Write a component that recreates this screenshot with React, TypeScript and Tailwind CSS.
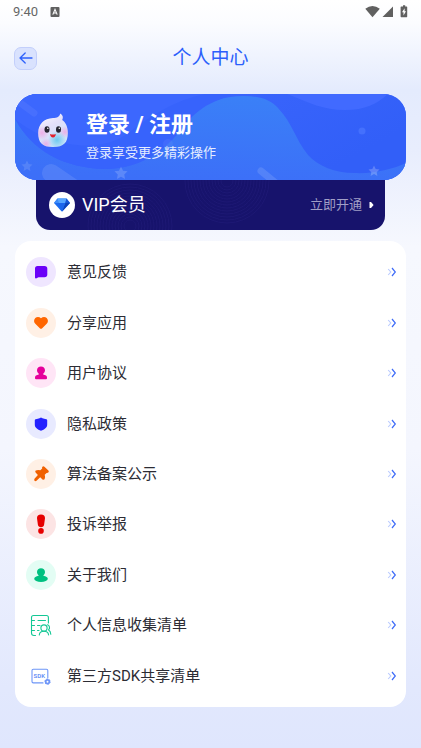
import React, { FC, ReactNode } from "react";

const STAR =
  "M0 -5.5L1.7 -1.9L5.5 -1.5L2.7 1.2L3.4 5L0 3.1L-3.4 5L-2.7 1.2L-5.5 -1.5L-1.7 -1.9Z";

const RINGS = [6, 9, 12, 15, 18, 21, 24, 27, 30, 33, 36, 39, 42];

type MenuItem = {
  label: string;
  badge: string;
  icon: ReactNode;
};

const menu: MenuItem[] = [
  {
    label: "意见反馈",
    badge: "bg-[#efe6ff]",
    icon: (
      <path
        fill="#6a00f8"
        d="M11.5 9H18.5Q21.3 9 21.3 11.5V17.5Q21.3 20.2 18.5 20.2H12.5L10 21.4Q9 21.6 9 20.6V11.5Q9 9 11.5 9Z"
      />
    ),
  },
  {
    label: "分享应用",
    badge: "bg-[#fff0e5]",
    icon: (
      <path
        fill="#ff6600"
        d="M15 10.2C16.8 8.5 19.2 8.6 20.7 10C22.4 11.7 22.3 14.2 20.7 15.8L16.2 20.2Q15 21.4 13.8 20.2L9.3 15.8C7.7 14.2 7.6 11.7 9.3 10C10.8 8.6 13.2 8.5 15 10.2Z"
      />
    ),
  },
  {
    label: "用户协议",
    badge: "bg-[#ffe5f6]",
    icon: (
      <path
        fill="#e5009b"
        d="M15 8.5C17.3 8.5 19 10.1 19 12.3C19 13.9 18.2 15 17.2 15.8V16.6L19.5 17.3Q21 17.8 21 19.4V20.2Q21 21.3 19.9 21.3H10.1Q9 21.3 9 20.2V19.4Q9 17.8 10.5 17.3L12.8 16.6V15.8C11.8 15 11 13.9 11 12.3C11 10.1 12.7 8.5 15 8.5Z"
      />
    ),
  },
  {
    label: "隐私政策",
    badge: "bg-[#e8eaff]",
    icon: (
      <path
        fill="#2321ff"
        d="M15 8.4L16.5 9.3Q18 10 20.3 10.2Q21.2 10.3 21.2 11.2V15.5C21.2 18.7 18.5 20.4 15 21.8C11.5 20.4 8.8 18.7 8.8 15.5V11.2Q8.8 10.3 9.7 10.2Q12 10 13.5 9.3Z"
      />
    ),
  },
  {
    label: "算法备案公示",
    badge: "bg-[#fff0e5]",
    icon: (
      <path
        fill="#f06000"
        d="M16.4 7.7Q17.4 6.8 18.4 7.7L22.4 11.6Q23.3 12.6 22.3 13.6Q21.4 14.1 20.6 13.9L18.7 15.8Q19.6 18.4 18.6 20.3Q17.5 21.2 16.5 20.4L14.2 18.2L10.5 21.8Q9.3 22.5 8.5 21.8Q7.9 20.9 8.5 19.8L11.9 15.9L9.6 13.6Q8.8 12.5 9.7 11.6Q11.8 10.5 14.3 11.3L16.2 9.6Q15.8 8.4 16.4 7.7Z"
      />
    ),
  },
  {
    label: "投诉举报",
    badge: "bg-[#fce4e4]",
    icon: (
      <g fill="#e60000">
        <path d="M15 5.4C17.6 5.4 19.2 6.8 19 9.2L18.1 15.8C17.9 17.4 16.8 18.3 15 18.3C13.2 18.3 12.1 17.4 11.9 15.8L11 9.2C10.8 6.8 12.4 5.4 15 5.4Z" />
        <circle cx="15" cy="21.9" r="2.8" />
      </g>
    ),
  },
  {
    label: "关于我们",
    badge: "bg-[#e3fdf4]",
    icon: (
      <g fill="#00c080">
        <path d="M15 8.2C17.3 8.2 19 9.8 19 12C19 13.5 18.2 14.6 17.3 15.4V17H12.7V15.4C11.8 14.6 11 13.5 11 12C11 9.8 12.7 8.2 15 8.2Z" />
        <ellipse cx="15" cy="18.8" rx="6.8" ry="3.2" />
      </g>
    ),
  },
  {
    label: "个人信息收集清单",
    badge: "",
    icon: (
      <g fill="none" stroke="#14c895" strokeWidth="1.1" strokeLinecap="round">
        <path d="M22.4 13V7.5Q22.4 5.5 20.4 5.5H7.5Q5.5 5.5 5.5 7.5V23Q5.5 25.5 8 25.5H9.5" />
        <path d="M5.5 10.5H8.5M12 10.5H19.5M5.5 15.5H8.5M11.5 15.5H14M5.5 20.5H8.5M11.5 20.5H13" />
        <circle cx="18" cy="18" r="3.1" />
        <path d="M13.3 25C13.5 22.6 15 21.3 18 21.3S22.3 22.6 22.6 25M21.3 14.8C23.6 15.2 24.3 18 22.6 19.9C24.2 20.8 24.7 22.2 24.8 24.3" />
      </g>
    ),
  },
  {
    label: "第三方SDK共享清单",
    badge: "",
    icon: (
      <g>
        <path
          fill="none"
          stroke="#6e96f8"
          strokeWidth="1.1"
          strokeLinecap="round"
          d="M21.8 17V9.5Q21.8 8.2 20.5 8.2H7.3Q6 8.2 6 9.5V20.6Q6 21.9 7.3 21.9H17"
        />
        <text
          x="7.6"
          y="17"
          fill="#5583f5"
          fontSize="6"
          fontWeight="500"
          fontFamily="Roboto, sans-serif"
        >
          SDK
        </text>
        <circle
          cx="21.5"
          cy="20.7"
          r="1.8"
          fill="none"
          stroke="#6e96f8"
          strokeWidth="1.7"
        />
        <circle
          cx="21.5"
          cy="20.7"
          r="2.7"
          fill="none"
          stroke="#6e96f8"
          strokeWidth="1"
          strokeDasharray="1.4 1.4"
        />
      </g>
    ),
  },
];

const StatusBar: FC = () => (
  <div className="flex h-6 items-center justify-between px-[13px] text-[#666]">
    <div className="flex items-center gap-3 font-[Roboto] text-[13px] leading-6">
      <span>9:40</span>
      <svg width="10" height="10" viewBox="0 0 10 10">
        <rect x="0.5" width="9" height="10" rx="1" fill="#606060" />
        <path
          d="M2.8 7.6L5 2.4L7.2 7.6M3.6 6H6.4"
          fill="none"
          stroke="#fff"
          strokeWidth="1.1"
        />
      </svg>
    </div>
    <svg width="43" height="14" viewBox="0 0 43 14" fill="#606060">
      <path d="M0.3 3.8Q7.5 -1.6 14.8 3.8L7.5 12.2Z" />
      <path d="M28 1.5V12H17.5Z" />
      <path d="M36.8 1.4H38V0.3H40.2V1.4H41.6Q42.2 1.4 42.2 2V11.6Q42.2 12.2 41.6 12.2H36.3Q35.6 12.2 35.6 11.6V2Q35.6 1.4 36.3 1.4Z" />
      <path fill="#fff" d="M39.6 3.2L37 7.3H38.5V10.5L41 6.2H39.6Z" />
    </svg>
  </div>
);

const Header: FC = () => (
  <header className="grid grid-cols-[24px_1fr_24px] items-center px-[14px] pt-5 pb-[22px]">
    <button
      aria-label="返回"
      className="flex h-[23px] w-[23px] items-center justify-center rounded-[7px] border border-[#c3cffb] bg-[#d9e2fe]"
    >
      <svg
        width="14"
        height="12"
        viewBox="0 0 14 12"
        fill="none"
        stroke="#2f62fb"
        strokeWidth="1.3"
        strokeLinecap="round"
        strokeLinejoin="round"
      >
        <path d="M13 6H1M6.2 1L1 6L6.2 11" />
      </svg>
    </button>
    <h1 className="text-center text-[19px] leading-7 text-[#2c5ffb]">
      个人中心
    </h1>
  </header>
);

const Mascot: FC = () => (
  <svg className="mb-3 shrink-0" width="32" height="36" viewBox="0 0 32 36">
    <defs>
      <linearGradient id="body" x1="0" y1="0" x2="0.5" y2="1">
        <stop offset="0" stopColor="#fff" />
        <stop offset="0.45" stopColor="#e3e0fa" />
        <stop offset="1" stopColor="#c9e2fa" />
      </linearGradient>
      <radialGradient id="blush">
        <stop offset="0" stopColor="#f29be0" stopOpacity="0.7" />
        <stop offset="1" stopColor="#f29be0" stopOpacity="0" />
      </radialGradient>
      <radialGradient id="glow">
        <stop offset="0" stopColor="#62c8ee" stopOpacity="0.9" />
        <stop offset="1" stopColor="#62c8ee" stopOpacity="0" />
      </radialGradient>
      <clipPath id="blob">
        <path d="M16 5C20 4.8 22.8 3.6 23.2 0.4C25.8 2 26.6 4.2 25.2 7C29 9.8 30.8 14 30.8 20C30.8 29.6 27 34 16 34S1.2 29.6 1.2 20C1.2 11 7 5.4 16 5Z" />
      </clipPath>
    </defs>
    <g clipPath="url(#blob)">
      <rect width="32" height="36" fill="url(#body)" />
      <circle cx="5" cy="20" r="7" fill="url(#blush)" />
      <circle cx="28" cy="19" r="6" fill="url(#blush)" />
      <circle cx="20" cy="27" r="9" fill="url(#glow)" />
      <circle cx="9" cy="31" r="6" fill="url(#blush)" />
    </g>
    <ellipse cx="10" cy="16.5" rx="2.5" ry="3.3" fill="#252530" />
    <ellipse cx="21.5" cy="16.5" rx="2.5" ry="3.3" fill="#252530" />
    <circle cx="10.8" cy="15.2" r="0.8" fill="#fff" />
    <circle cx="22.3" cy="15.2" r="0.8" fill="#fff" />
    <path d="M13 21Q16 22 18.8 21Q18.5 24.4 16 24.4Q13.4 24.4 13 21Z" fill="#e3202c" />
  </svg>
);

const LoginCard: FC = () => (
  <a
    href="#login"
    className="relative z-10 flex h-[86px] items-center overflow-hidden rounded-[22px] bg-[#3864fc] pl-[22px] text-white"
  >
    <svg
      className="absolute inset-0 h-full w-full"
      viewBox="0 0 391 86"
      preserveAspectRatio="none"
    >
      <defs>
        <linearGradient id="base" x1="0" y1="0" x2="1" y2="0.4">
          <stop offset="0" stopColor="#3f69ff" />
          <stop offset="1" stopColor="#325ff8" />
        </linearGradient>
        <linearGradient id="wave" x1="0.6" y1="0" x2="0.4" y2="1">
          <stop offset="0" stopColor="#3a80f7" />
          <stop offset="1" stopColor="#3c6ff8" />
        </linearGradient>
      </defs>
      <rect width="391" height="86" fill="url(#base)" />
      <path
        d="M0 25C18 58 50 74 90 75C125 75 150 56 173 24C190 8 208 2 229 2C245 2 256 6 263 14C278 30 280 45 293 61C303 72 320 79 339 79C360 80 378 75 391 69V86H0Z"
        fill="url(#wave)"
      />
      <path
        d="M0 25C18 58 50 74 90 75C130 75 155 52 172 28C182 17 192 10 206 5L216 0H0Z"
        fill="#3763fc"
      />
      <path d="M0 0H190C160 6 135 22 112 40C80 62 30 50 0 25Z" fill="#3c67fe" />
      <path d="M272 0C295 9 308 16 330 16C350 16 362 10 373 0Z" fill="#416aff" />
      <circle cx="347" cy="37" r="3.5" fill="#4470fd" />
      <g stroke="#fff" strokeLinecap="round">
        <path d="M36 79L64 98" strokeWidth="18" strokeOpacity="0.1" />
        <path d="M246 77L262 90" strokeWidth="7" strokeOpacity="0.12" />
        <path d="M4 8L19 19" strokeWidth="7" strokeOpacity="0.06" />
      </g>
      <g fill="#fff" fillOpacity="0.17">
        <path transform="translate(12 72)" d={STAR} fillOpacity="0.12" />
        <path transform="translate(106 79) scale(1.2)" d={STAR} />
        <path transform="translate(359 77)" d={STAR} fillOpacity="0.22" />
      </g>
      <circle cx="153" cy="50" r="5" fill="#fff" fillOpacity="0.05" />
    </svg>
    <div className="relative flex items-center gap-[17px]">
      <Mascot />
      <div>
        <p className="text-[22px] leading-8 font-bold">登录 / 注册</p>
        <p className="text-[13px] leading-6 text-[#e6edff]">
          登录享受更多精彩操作
        </p>
      </div>
    </div>
  </a>
);

const VipBar: FC = () => (
  <div className="relative mx-[21px] flex h-[50px] items-center justify-between overflow-hidden rounded-b-[14px] bg-[#17136c] pr-[11px] pl-[13px]">
    <svg
      className="absolute inset-0 h-full w-full"
      viewBox="0 0 349 50"
      preserveAspectRatio="xMinYMin slice"
      fill="none"
      stroke="#201b76"
      strokeWidth="0.8"
    >
      {RINGS.map((r) => (
        <g key={r}>
          <circle cx="94" cy="46" r={r} />
          <circle cx="191" cy="1" r={r} />
        </g>
      ))}
    </svg>
    <div className="relative flex items-center gap-[7px]">
      <span className="flex h-[26px] w-[26px] items-center justify-center rounded-full bg-white">
        <svg width="18" height="14" viewBox="0 0 18 14">
          <path d="M4.5 0.5H13.5L17 5L9.8 13Q9 13.8 8.2 13L1 5Z" fill="#1c6cf0" />
          <path d="M4.5 0.5H13.5L12.3 5H5.5Z" fill="#56a6ff" />
          <path d="M4.5 0.5L5.5 5H1Z" fill="#3e8cf8" />
          <path d="M13.5 0.5L12.3 5H17Z" fill="#1657d8" />
          <path d="M12.3 5H17L9 13.6Z" fill="#0c43b8" />
          <path d="M5.5 5H12.3L9 13.6Z" fill="#1b66ec" />
        </svg>
      </span>
      <span className="text-lg leading-6 text-white">VIP会员</span>
    </div>
    <button className="relative flex items-center gap-[7px] text-[13px] leading-6 text-[#a19fc6]">
      立即开通
      <svg width="5" height="6" viewBox="0 0 5 6">
        <path d="M0.5 0H2L4.6 3L2 6H0.5Z" fill="#fff" />
      </svg>
    </button>
  </div>
);

const MenuRow: FC<MenuItem> = ({ label, badge, icon }) => (
  <li className="flex">
    <a href="#" className="flex flex-1 items-center pr-[9px] pl-[11px]">
      <span className={`h-[30px] w-[30px] rounded-full ${badge}`}>
        <svg width="30" height="30" viewBox="0 0 30 30">
          {icon}
        </svg>
      </span>
      <span className="ml-[11px] flex-1 text-[15px] leading-6 text-[#2c2c34]">
        {label}
      </span>
      <svg width="10" height="10" viewBox="0 0 10 10" fill="none">
        <path d="M1.2 2L3.8 5L1.2 8" stroke="#b9caff" strokeWidth="1.1" />
        <path d="M5 1L8.3 5L5 9" stroke="#3f6cf8" strokeWidth="1.2" />
      </svg>
    </a>
  </li>
);

export default function App() {
  return (
    <div className="min-h-screen bg-[linear-gradient(180deg,#ffffff_0%,#fbfcff_3%,#e4ebfd_12%,#e8edfd_20%,#f6f8fe_33%,#f4f6fe_60%,#e2e8fd_92%,#dfe6fd_100%)] font-[Roboto,'Noto_Sans_CJK_SC',sans-serif]">
      <StatusBar />
      <Header />
      <main className="px-[15px] pb-10">
        <LoginCard />
        <VipBar />
        <ul className="mt-[11px] grid min-h-[466px] auto-rows-fr rounded-2xl bg-white py-[6px]">
          {menu.map((item) => (
            <MenuRow key={item.label} {...item} />
          ))}
        </ul>
      </main>
    </div>
  );
}
